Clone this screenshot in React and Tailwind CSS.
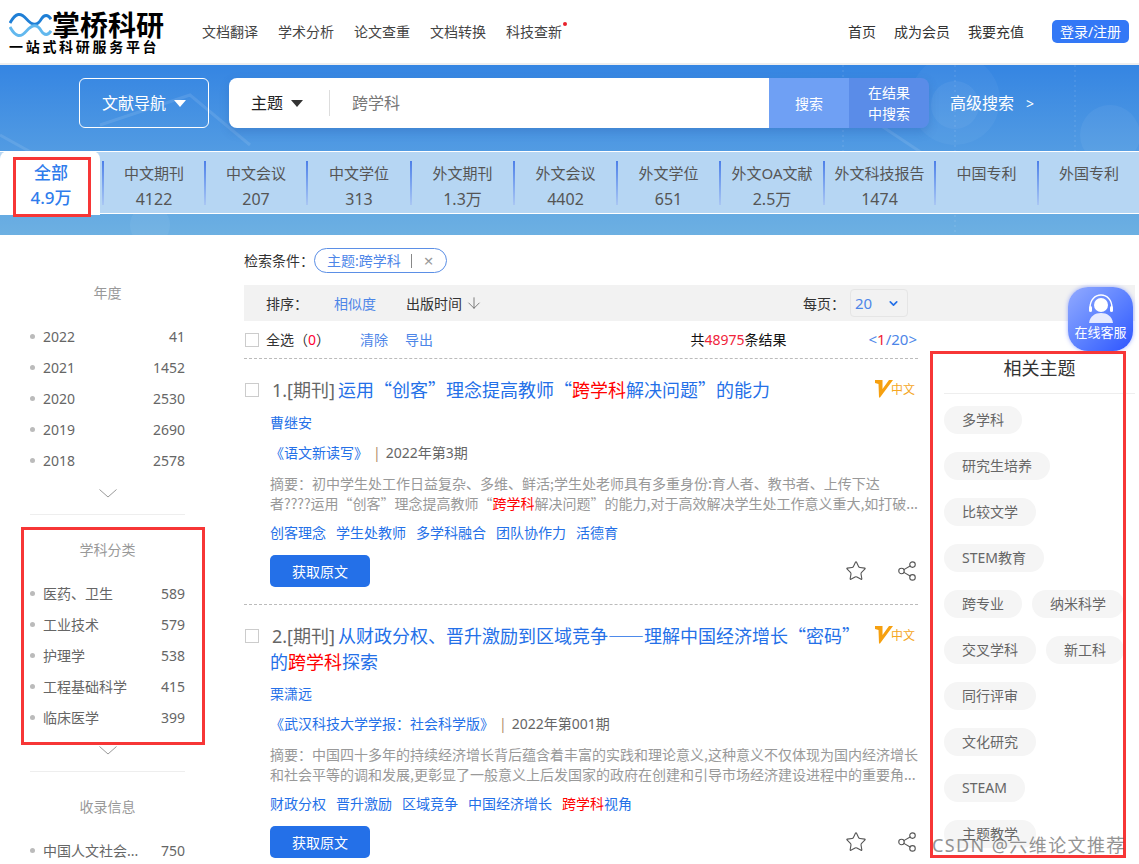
import React from 'react';
import { Star, Share2, ArrowDown, ChevronDown } from 'lucide-react';

const navLeft = ['文档翻译', '学术分析', '论文查重', '文档转换', '科技查新'];
const navRight = ['首页', '成为会员', '我要充值'];

const tabs = [
  { name: '中文期刊', count: '4122', w: 'w-[102px]' },
  { name: '中文会议', count: '207', w: 'w-[102px]' },
  { name: '中文学位', count: '313', w: 'w-[104px]' },
  { name: '外文期刊', count: '1.3万', w: 'w-[103px]' },
  { name: '外文会议', count: '4402', w: 'w-[103px]' },
  { name: '外文学位', count: '651', w: 'w-[103px]' },
  { name: '外文OA文献', count: '2.5万', w: 'w-[104px]' },
  { name: '外文科技报告', count: '1474', w: 'w-[111px]' },
  { name: '中国专利', count: '', w: 'w-[103px]' },
  { name: '外国专利', count: '', w: 'w-[102px]' },
];

const years = [['2022', '41'], ['2021', '1452'], ['2020', '2530'], ['2019', '2690'], ['2018', '2578']];
const subjects = [['医药、卫生', '589'], ['工业技术', '579'], ['护理学', '538'], ['工程基础科学', '415'], ['临床医学', '399']];
const topics = ['多学科', '研究生培养', '比较文学', 'STEM教育', '跨专业', '纳米科学', '交叉学科', '新工科', '同行评审', '文化研究', 'STEAM', '主题教学'];

const Hl = ({ children }) => <span className="text-[#ff0000]">{children}</span>;

const Logo = () => (
  <div className="w-[170px] pl-[9px] pt-[8px]">
    <div className="flex items-center">
      <svg width="43" height="30" viewBox="0 0 44 30" fill="none">
        <path d="M1 13 C7 2 12 2 18 9 C24 16 29 16 33 9 C36 4 40 4 43 9" stroke="#1f7fd6" strokeWidth="3" />
        <path d="M1 17 C7 28 12 28 18 21 C24 14 29 14 33 21 C36 26 40 26 43 21" stroke="#62b8ee" strokeWidth="3" />
      </svg>
      <span className="text-[28px] leading-[34px] font-bold text-black">掌桥科研</span>
    </div>
    <div className="text-[14px] leading-[16px] font-bold text-black tracking-[2.7px] -mt-[3px] whitespace-nowrap">一站式科研服务平台</div>
  </div>
);

const Header = () => (
  <header className="h-[65px] flex items-start bg-white border-b-2 border-[#eeeeee]">
    <Logo />
    <nav className="flex gap-[20px] ml-[32px] pt-[22px] text-[14px] leading-[20px] text-[#444]">
      {navLeft.map((n, i) => (
        <span key={n} className="relative">
          {n}
          {i === 4 && <i className="absolute -right-[5px] top-0 w-[4px] h-[4px] rounded-full bg-[#e8212b]" />}
        </span>
      ))}
    </nav>
    <div className="ml-auto flex items-center pt-[20px] pr-[10px]">
      <div className="flex gap-[18px] text-[14px] leading-[20px] text-[#333]">
        {navRight.map((n) => <span key={n}>{n}</span>)}
      </div>
      <button className="ml-[28px] w-[77px] h-[23px] rounded-[5px] bg-[#3378f6] text-white text-[14px] leading-[23px]">登录/注册</button>
    </div>
  </header>
);

const TabDivider = () => (
  <i className="block w-[2px] h-[44px] shrink-0 bg-gradient-to-b from-[#4d7fe8] to-[#a9c6f3]" />
);

const Hero = () => (
  <section className="relative h-[170px] bg-gradient-to-b from-[#3585e2] to-[#6db0e2] overflow-hidden">
    <svg className="absolute inset-0" width="1139" height="170" fill="none">
      <circle cx="955" cy="40" r="24" fill="#ffffff" fillOpacity="0.05" />
      <circle cx="955" cy="35" r="45" fill="#ffffff" fillOpacity="0.04" />
      <circle cx="1110" cy="70" r="30" fill="#ffffff" fillOpacity="0.05" />
      <circle cx="150" cy="160" r="20" fill="#ffffff" fillOpacity="0.06" />
      <path d="M0 70 L90 120 M100 60 L190 30 L250 80 M880 60 L925 90" stroke="#ffffff" strokeOpacity="0.1" strokeWidth="3" />
      <path d="M843 0 V110 M955 0 V170 M1075 0 V110" stroke="#ffffff" strokeOpacity="0.15" strokeDasharray="2 3" />
    </svg>
    <div className="relative flex items-stretch h-[50px] mt-[13px] ml-[79px]">
      <button className="w-[130px] flex items-center justify-center gap-[8px] rounded-[6px] border border-white text-white text-[16px]">
        文献导航
        <span className="w-0 h-0 border-x-[6px] border-x-transparent border-t-[7px] border-t-white" />
      </button>
      <div className="ml-[20px] w-[700px] flex rounded-[8px] overflow-hidden shadow-[0_4px_10px_rgba(30,80,160,0.25)]">
        <div className="w-[540px] bg-white flex items-center">
          <span className="ml-[22px] text-[16px] text-[#222]">主题</span>
          <span className="ml-[8px] w-0 h-0 border-x-[6px] border-x-transparent border-t-[7px] border-t-[#333]" />
          <i className="ml-[26px] w-px h-[26px] bg-[#dddddd]" />
          <span className="ml-[22px] text-[16px] text-[#777]">跨学科</span>
        </div>
        <button className="w-[80px] bg-[#6fa0f4] text-white text-[14px]">搜索</button>
        <button className="w-[80px] bg-[#5a8ce8] text-white text-[14px] leading-[21px]">在结果<br />中搜索</button>
      </div>
      <div className="ml-[21px] flex items-center text-white text-[16px]">
        高级搜索
        <span className="ml-[12px] text-[14px]">&gt;</span>
      </div>
    </div>
    <div className="relative mt-[23px] h-[63px] flex bg-[#b6d6f3] border-y border-white">
      <div className="w-[100px] -mt-px h-[64px] mr-[2px] pl-[2px] bg-white rounded-t-[8px] text-center text-[#2f7cec] text-[17px] font-medium">
        <div className="pt-[10px] leading-[24px]">全部</div>
        <div className="pt-[1px] leading-[24px]">4.9万</div>
      </div>
      {tabs.map((t) => (
        <div key={t.name} className={`${t.w} shrink-0 flex items-center`}>
          <TabDivider />
          <div className="flex-1 text-center text-[15px] text-[#555] self-start whitespace-nowrap">
            <div className="pt-[9px] leading-[24px]">{t.name}</div>
            <div className="pt-[2px] leading-[24px] text-[16px]">{t.count}</div>
          </div>
        </div>
      ))}
    </div>
  </section>
);

const FacetChevron = () => (
  <svg className="mx-auto" width="18" height="9" viewBox="0 0 18 9" fill="none">
    <path d="M0.5 0.5 L9 8 L17.5 0.5" stroke="#999" />
  </svg>
);

const Facet = ({ title, rows, chevron = true }) => (
  <div>
    <div className="h-[20px] text-center text-[14px] leading-[20px] text-[#999]">{title}</div>
    <ul className="mt-[18px]">
      {rows.map(([k, v]) => (
        <li key={k} className="flex items-center h-[31px] text-[14px] text-[#666]">
          <i className="w-[5px] h-[5px] rounded-full bg-[#bbbbbb] mr-[8px]" />
          <span className="flex-1 truncate">{k}</span>
          <span className="ml-[14px]">{v}</span>
        </li>
      ))}
    </ul>
    {chevron && (
      <div className="pt-[13px] pb-[16px] border-b border-[#eeeeee] mb-[25px]">
        <FacetChevron />
      </div>
    )}
  </div>
);

const Sidebar = () => (
  <aside className="w-[155px] ml-[30px] mr-[59px] pt-[48px] shrink-0">
    <Facet title="年度" rows={years} />
    <Facet title="学科分类" rows={subjects} />
    <Facet title="收录信息" rows={[['中国人文社会...', '750']]} chevron={false} />
  </aside>
);

const Checkbox = ({ className = '' }) => (
  <i className={`block w-[14px] h-[14px] shrink-0 border border-[#cccccc] bg-white ${className}`} />
);

const Result = ({ index, title, author, journal, issue, abstract, keywords }) => (
  <article className="flex border-b border-dashed border-[#bbbbbb] pb-[17px]">
    <Checkbox className="ml-[1px] mt-[24px] mr-[11px]" />
    <div className="flex-1">
      <div className="flex justify-between items-start pt-[17px]">
        <h3 className="w-[592px] min-h-[27px] text-[18px] leading-[26px] font-normal text-[#2470e8] indent-[2px] font-['Noto_Sans_CJK_SC',sans-serif]">
          <span className="mr-[3px] leading-none text-[#666] font-['Noto_Sans','Noto_Sans_CJK_SC',sans-serif]">{index}.[期刊]</span>{title}
        </h3>
        <div className="flex items-end mr-[3px] mt-[4px]">
          <svg width="18" height="18" viewBox="0 0 18 18"><path d="M0 0 H7.5 V9 L14 0 H18 L5 17.5 H4 L3.5 4 L0 3 Z" fill="#f6a010" /></svg>
          <span className="text-[12px] leading-[16px] text-[#f5a623] -ml-[2px]">中文</span>
        </div>
      </div>
      <div className="mt-[10px] text-[14px] leading-[20px] text-[#2470e8]">{author}</div>
      <div className="mt-[10px] text-[14px] leading-[20px] text-[#666]">
        <span className="text-[#2470e8]">{journal}</span>
        <span className="mx-[5px] text-[#b08b6b]">|</span>{issue}
      </div>
      <div className="mt-[10px] text-[14px] leading-[20px] text-[#999] whitespace-nowrap font-['Noto_Sans_CJK_SC',sans-serif]">
        {abstract.map((line, i) => <div key={i}>{line}</div>)}
      </div>
      <div className="mt-[10px] flex gap-[10px] text-[14px] leading-[20px] text-[#2470e8]">
        {keywords}
      </div>
      <div className="mt-[12px] flex items-center justify-between">
        <button className="w-[100px] h-[32px] rounded-[5px] bg-[#2470e8] text-white text-[14px]">获取原文</button>
        <div className="flex items-center gap-[29px]">
          <Star size={22} strokeWidth={1.2} className="text-[#555]" />
          <Share2 size={22} strokeWidth={1.2} className="text-[#555]" />
        </div>
      </div>
    </div>
  </article>
);

const Results = () => (
  <div className="w-[674px] shrink-0">
    <div className="h-[38px] flex items-center border-b border-dashed border-[#bbbbbb] text-[14px]">
      <Checkbox className="ml-[1px] mr-[7px]" />
      <span className="text-[#333]">全选（<span className="text-[#f03]">0</span>）</span>
      <span className="ml-[30px] text-[#4d86e8]">清除</span>
      <span className="ml-[17px] text-[#4d86e8]">导出</span>
      <span className="ml-auto text-[#111]">共<span className="text-[#f0243a]">48975</span>条结果</span>
      <span className="ml-[82px] mr-[1px] text-[15px] text-[#4d86e8]">&lt;<span className="text-[#f0243a]">1</span>/20&gt;</span>
    </div>
    <Result
      index={1}
      title={<>运用“创客”理念提高教师“<Hl>跨学科</Hl>解决问题”的能力</>}
      author="曹继安"
      journal="《语文新读写》"
      issue="2022年第3期"
      abstract={[
        '摘要：初中学生处工作日益复杂、多维、鲜活;学生处老师具有多重身份:育人者、教书者、上传下达',
        <React.Fragment key="a">者????运用“创客”理念提高教师“<Hl>跨学科</Hl>解决问题”的能力,对于高效解决学生处工作意义重大,如打破...</React.Fragment>,
      ]}
      keywords={['创客理念', '学生处教师', '多学科融合', '团队协作力', '活德育'].map((k) => <span key={k}>{k}</span>)}
    />
    <Result
      index={2}
      title={<>从财政分权、晋升激励到区域竞争——理解中国经济增长“密码”的<Hl>跨学科</Hl>探索</>}
      author="栗潇远"
      journal="《武汉科技大学学报：社会科学版》"
      issue="2022年第001期"
      abstract={[
        '摘要：中国四十多年的持续经济增长背后蕴含着丰富的实践和理论意义,这种意义不仅体现为国内经济增长',
        '和社会平等的调和发展,更彰显了一般意义上后发国家的政府在创建和引导市场经济建设进程中的重要角...',
      ]}
      keywords={[
        <span key="1">财政分权</span>,
        <span key="2">晋升激励</span>,
        <span key="3">区域竞争</span>,
        <span key="4">中国经济增长</span>,
        <span key="5"><Hl>跨学科</Hl>视角</span>,
      ]}
    />
  </div>
);

const Topics = () => (
  <aside className="ml-[26px] w-[191px] shrink-0 pt-[34px]">
    <h3 className="h-[39px] text-center text-[18px] leading-[26px] font-normal text-[#333] border-b border-[#eeeeee]">相关主题</h3>
    <div className="mt-[12px] flex flex-wrap gap-x-[10px] gap-y-[18px] w-[182px]">
      {topics.map((t) => (
        <span key={t} className="h-[28px] px-[18px] rounded-full bg-[#f5f5f5] text-[14px] leading-[28px] text-[#666] whitespace-nowrap">{t}</span>
      ))}
    </div>
  </aside>
);

const ServiceButton = () => (
  <div className="absolute left-[1068px] top-[287px] w-[65px] h-[64px] rounded-[20px] bg-gradient-to-br from-[#93aaff] to-[#2f52ff] shadow-[0_0_4px_rgba(70,100,255,0.5)] text-center text-white">
    <svg className="mx-auto mt-[6px]" width="30" height="30" viewBox="0 0 30 30" fill="none">
      <path d="M4 15 C4 7 9 2 15 2 C21 2 26 7 26 15" stroke="#ffffff" strokeWidth="1.4" />
      <rect x="3" y="13" width="3" height="6" rx="1.5" fill="#ffffff" />
      <rect x="24" y="13" width="3" height="6" rx="1.5" fill="#ffffff" />
      <circle cx="15" cy="12" r="7" fill="#ffffff" />
      <path d="M3 30 C4 23 9 20 15 20 C21 20 26 23 27 30 Z" fill="#e6eaff" />
    </svg>
    <div className="text-[13px] leading-[18px] whitespace-nowrap">在线客服</div>
  </div>
);

export default function App() {
  return (
    <div lang="zh-CN" className="relative w-[1139px] h-[864px] overflow-hidden bg-white font-['Noto_Sans','Noto_Sans_CJK_SC',sans-serif]">
      <Header />
      <Hero />
      <div className="flex">
        <Sidebar />
        <main className="w-[891px] shrink-0">
          <div className="h-[50px] flex items-center text-[14px] text-[#333] pt-[1px]">
            检索条件：
            <span className="h-[25px] w-[133px] flex items-center rounded-full border border-[#5b8fe6] text-[#4d86e8] pl-[12px]">
              主题:跨学科
              <i className="ml-[10px] w-px h-[14px] bg-[#888]" />
              <span className="ml-[12px] text-[#999] text-[17px] leading-none">×</span>
            </span>
          </div>
          <div className="h-[36px] bg-[#f2f2f2] flex items-center text-[14px] text-[#333]">
            <span className="ml-[22px]">排序：</span>
            <span className="ml-[26px] text-[#4d86e8]">相似度</span>
            <span className="ml-[30px]">出版时间</span>
            <ArrowDown size={18} strokeWidth={1} className="ml-[3px] text-[#555]" />
            <span className="ml-[320px]">每页：</span>
            <div className="ml-[5px] w-[58px] h-[28px] border border-[#e5e5e5] rounded-[4px] flex items-center justify-between pl-[4px] pr-[7px] text-[#4d86e8] text-[15px]">
              20
              <ChevronDown size={13} strokeWidth={3} className="text-[#2470e8]" />
            </div>
          </div>
          <div className="flex">
            <Results />
            <Topics />
          </div>
        </main>
      </div>
      <ServiceButton />
      {/* annotation boxes drawn over the page */}
      <div className="absolute left-[13px] top-[157px] w-[78px] h-[60px] border-[3px] border-[#f73636]" />
      <div className="absolute left-[21px] top-[527px] w-[184px] h-[218px] border-[3px] border-[#f73636]" />
      <div className="absolute left-[930px] top-[351px] w-[196px] h-[507px] border-[3px] border-[#f73636]" />
      <div className="absolute left-[932px] top-[832px] text-[18px] leading-[26px] tracking-[1.4px] text-[#666] opacity-70 whitespace-nowrap">CSDN @六维论文推荐</div>
    </div>
  );
}
